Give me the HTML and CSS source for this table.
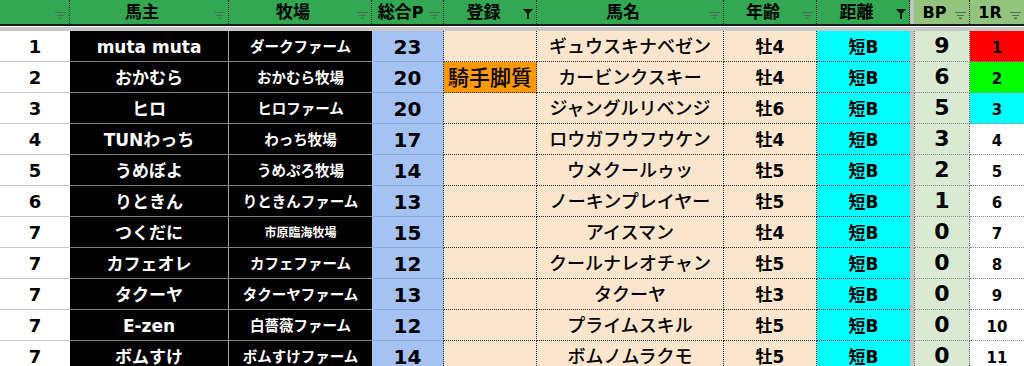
FILE: index.html
```html
<!DOCTYPE html>
<html lang="ja">
<head>
<meta charset="utf-8">
<title>ランキング</title>
<link rel="stylesheet" href="styles.css">
</head>
<body>
<div class="sheet">
  <div class="row head">
    <div class="hc"><span class="ht"></span><svg class="fi" viewBox="0 0 11 7"><path d="M0 0.5H11M2 3.5H9M4 6.3H7"/></svg></div>
    <div class="hc"><span class="ht">馬主</span><svg class="fi" viewBox="0 0 11 7"><path d="M0 0.5H11M2 3.5H9M4 6.3H7"/></svg></div>
    <div class="hc"><span class="ht">牧場</span><svg class="fi" viewBox="0 0 11 7"><path d="M0 0.5H11M2 3.5H9M4 6.3H7"/></svg></div>
    <div class="hc"><span class="ht">総合<span class="lat">P</span></span><svg class="fi" viewBox="0 0 11 7"><path d="M0 0.5H11M2 3.5H9M4 6.3H7"/></svg></div>
    <div class="hc"><span class="ht">登録</span><svg class="fa" viewBox="0 0 10 10"><path d="M0 0H10L6 4.5V10H4V4.5Z"/></svg></div>
    <div class="hc"><span class="ht">馬名</span><svg class="fi" viewBox="0 0 11 7"><path d="M0 0.5H11M2 3.5H9M4 6.3H7"/></svg></div>
    <div class="hc"><span class="ht">年齢</span><svg class="fi" viewBox="0 0 11 7"><path d="M0 0.5H11M2 3.5H9M4 6.3H7"/></svg></div>
    <div class="hc"><span class="ht">距離</span><svg class="fa" viewBox="0 0 10 10"><path d="M0 0H10L6 4.5V10H4V4.5Z"/></svg></div>
    <div class="gap"></div>
    <div class="hc light"><span class="ht lat">BP</span><svg class="fi" viewBox="0 0 11 7"><path d="M0 0.5H11M2 3.5H9M4 6.3H7"/></svg></div>
    <div class="hc light last"><span class="ht lat">1R</span><svg class="fi" viewBox="0 0 11 7"><path d="M0 0.5H11M2 3.5H9M4 6.3H7"/></svg></div>
  </div>
  <div class="hsep"></div>

  <div class="row"><div class="c rank">1</div><div class="c own">muta muta</div><div class="c farm">ダークファーム</div><div class="c pt">23</div><div class="c reg"></div><div class="c name">ギュウスキナベゼン</div><div class="c age">牡4</div><div class="c dist">短B</div><div class="gap"></div><div class="c bp">9</div><div class="c r1 red">1</div></div>
  <div class="row"><div class="c rank">2</div><div class="c own">おかむら</div><div class="c farm">おかむら牧場</div><div class="c pt">20</div><div class="c reg on">騎手脚質</div><div class="c name">カービンクスキー</div><div class="c age">牡4</div><div class="c dist">短B</div><div class="gap"></div><div class="c bp">6</div><div class="c r1 green">2</div></div>
  <div class="row"><div class="c rank">3</div><div class="c own">ヒロ</div><div class="c farm">ヒロファーム</div><div class="c pt">20</div><div class="c reg"></div><div class="c name">ジャングルリベンジ</div><div class="c age">牡6</div><div class="c dist">短B</div><div class="gap"></div><div class="c bp">5</div><div class="c r1 cyan">3</div></div>
  <div class="row"><div class="c rank">4</div><div class="c own">TUNわっち</div><div class="c farm">わっち牧場</div><div class="c pt">17</div><div class="c reg"></div><div class="c name">ロウガフウフウケン</div><div class="c age">牡4</div><div class="c dist">短B</div><div class="gap"></div><div class="c bp">3</div><div class="c r1">4</div></div>
  <div class="row"><div class="c rank">5</div><div class="c own">うめぼよ</div><div class="c farm">うめぷろ牧場</div><div class="c pt">14</div><div class="c reg"></div><div class="c name">ウメクールゥッ</div><div class="c age">牡5</div><div class="c dist">短B</div><div class="gap"></div><div class="c bp">2</div><div class="c r1">5</div></div>
  <div class="row"><div class="c rank">6</div><div class="c own">りときん</div><div class="c farm">りときんファーム</div><div class="c pt">13</div><div class="c reg"></div><div class="c name">ノーキンプレイヤー</div><div class="c age">牡5</div><div class="c dist">短B</div><div class="gap"></div><div class="c bp">1</div><div class="c r1">6</div></div>
  <div class="row"><div class="c rank">7</div><div class="c own">つくだに</div><div class="c farm small">市原臨海牧場</div><div class="c pt">15</div><div class="c reg"></div><div class="c name">アイスマン</div><div class="c age">牡4</div><div class="c dist">短B</div><div class="gap"></div><div class="c bp">0</div><div class="c r1">7</div></div>
  <div class="row"><div class="c rank">7</div><div class="c own">カフェオレ</div><div class="c farm">カフェファーム</div><div class="c pt">12</div><div class="c reg"></div><div class="c name">クールナレオチャン</div><div class="c age">牡5</div><div class="c dist">短B</div><div class="gap"></div><div class="c bp">0</div><div class="c r1">8</div></div>
  <div class="row"><div class="c rank">7</div><div class="c own">タクーヤ</div><div class="c farm">タクーヤファーム</div><div class="c pt">13</div><div class="c reg"></div><div class="c name">タクーヤ</div><div class="c age">牡3</div><div class="c dist">短B</div><div class="gap"></div><div class="c bp">0</div><div class="c r1">9</div></div>
  <div class="row"><div class="c rank">7</div><div class="c own">E-zen</div><div class="c farm">白薔薇ファーム</div><div class="c pt">12</div><div class="c reg"></div><div class="c name">プライムスキル</div><div class="c age">牡5</div><div class="c dist">短B</div><div class="gap"></div><div class="c bp">0</div><div class="c r1">10</div></div>
  <div class="row"><div class="c rank">7</div><div class="c own">ボムすけ</div><div class="c farm">ボムすけファーム</div><div class="c pt">14</div><div class="c reg"></div><div class="c name">ボムノムラクモ</div><div class="c age">牡5</div><div class="c dist">短B</div><div class="gap"></div><div class="c bp">0</div><div class="c r1">11</div></div>
</div>
</body>
</html>
```

FILE: styles.css
```css
html, body {
  margin: 0;
  padding: 0;
  overflow: hidden;
  background: #ffffff;
}

.sheet {
  width: 1024px;
  font-family: "DejaVu Sans", "Noto Sans CJK JP", sans-serif;
  color: #000;
}

.row {
  display: grid;
  grid-template-columns: 70px 159px 143px 72px 93px 187px 93px 93px 4px 56px 54px;
  height: 31px;
}

.gap {
  background: #c3c3c3;
}

/* header */
.head {
  height: 26px;
  border-bottom: 2px solid #1c1c1c;
  box-sizing: border-box;
}

.hc {
  display: flex;
  align-items: center;
  background: #33a853;
  border-right: 1px dotted #1e1e1e;
  padding-right: 3px;
  box-sizing: border-box;
  font-size: 17px;
  font-weight: bold;
  line-height: 1;
}

.hc.light {
  background: #93c47d;
}

.hc.last {
  border-right: none;
}

.ht {
  flex: 1;
  text-align: center;
  padding-top: 1px;
}

.lat {
  font-size: 16px;
}

.fi {
  width: 11px;
  height: 7px;
  margin-top: 6px;
  flex: none;
}

.fi path {
  stroke: #4f6e56;
  stroke-width: 1.2;
  fill: none;
}

.fa {
  width: 10px;
  height: 10px;
  margin-top: 4px;
  flex: none;
}

.fa path {
  fill: #1a1a1a;
}

.hsep {
  height: 5px;
  border-top: 1px solid #ffffff;
  background: #c8c8c8;
  box-sizing: border-box;
}

/* body cells */
.c {
  display: flex;
  align-items: center;
  justify-content: center;
  box-sizing: border-box;
  padding-top: 2px;
  line-height: 1;
  font-weight: bold;
  white-space: nowrap;
}

.rank {
  background: #ffffff;
  border-bottom: 1px solid #c9c9c9;
  font-size: 18px;
}

.own {
  background: #000;
  color: #fff;
  font-size: 17px;
  border-bottom: 1px solid #808080;
  border-right: 1px solid #a0a0a0;
}

.farm {
  background: #000;
  color: #fff;
  font-size: 14.5px;
  border-bottom: 1px solid #808080;
}

.farm.small {
  font-size: 12px;
}

.pt {
  background: #a4c2f4;
  font-size: 20px;
  border-bottom: 1px solid #8eaad8;
  border-right: 1px dotted #2a2a2a;
}

.reg {
  background: #fce5cd;
  border-bottom: 1px dotted #2a2a2a;
  border-right: 1px dotted #2a2a2a;
  font-size: 21px;
  font-weight: 500;
}

.reg.on {
  background: #ff9900;
}

.name {
  background: #fce5cd;
  font-size: 18px;
  font-weight: 500;
  border-bottom: 1px dotted #2a2a2a;
  border-right: 1px dotted #2a2a2a;
}

.age {
  background: #fce5cd;
  font-size: 17px;
  border-bottom: 1px dotted #2a2a2a;
  border-right: 1px dotted #2a2a2a;
}

.dist {
  background: #00ffff;
  font-size: 17px;
  border-bottom: 1px dotted #2a2a2a;
}

.bp {
  background: #d9ead3;
  font-size: 22px;
  padding-top: 0;
  border-left: 1px dotted #6a6a6a;
  border-right: 1px dotted #6a6a6a;
  border-bottom: 1px dotted #8a8a8a;
}

.r1 {
  background: #ffffff;
  font-size: 15px;
  padding-top: 4px;
  border-bottom: 1px dotted #8a8a8a;
}

.r1.red {
  background: #ff0000;
}

.r1.green {
  background: #00ff00;
}

.r1.cyan {
  background: #00ffff;
}
```
